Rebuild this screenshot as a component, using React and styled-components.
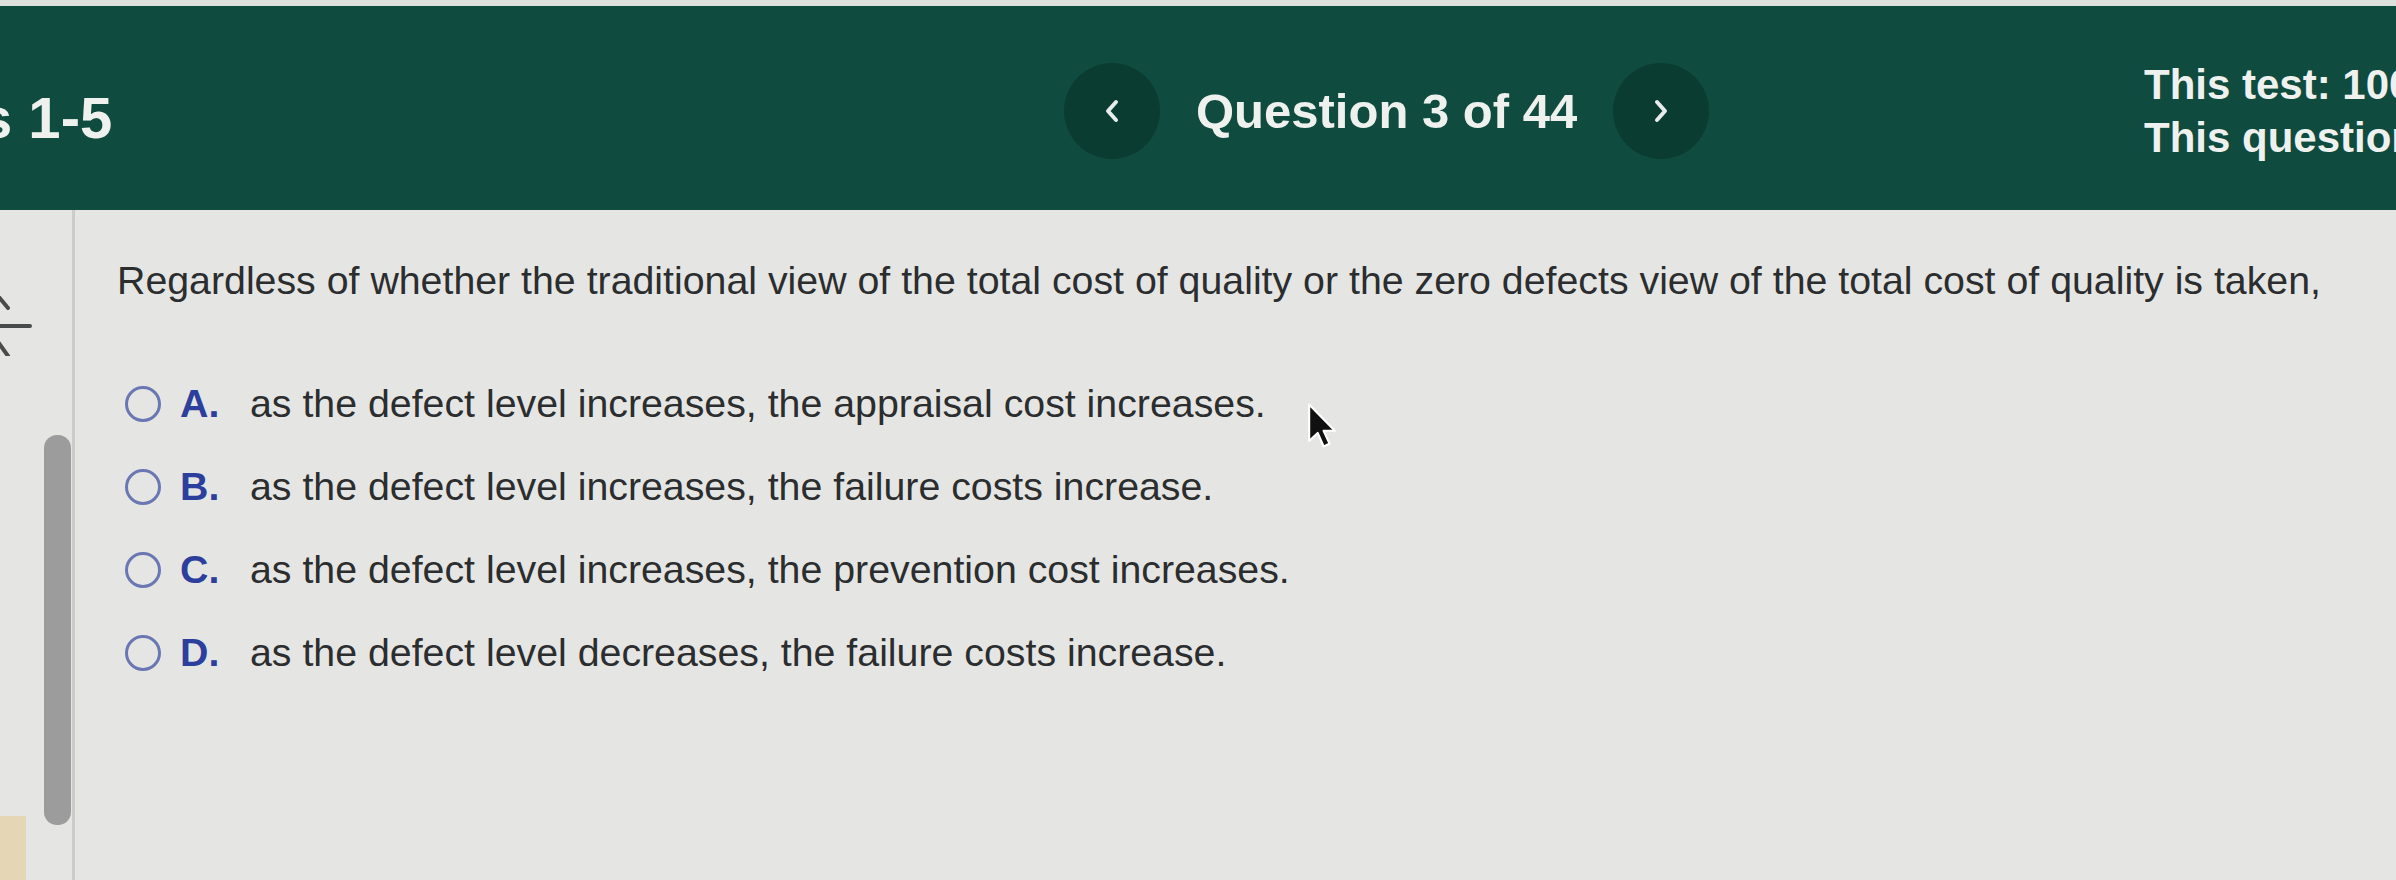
import React from 'react';
import styled, { createGlobalStyle } from 'styled-components';

const Global = createGlobalStyle`
  html, body {
    margin: 0;
    padding: 0;
  }
  body {
    width: 2396px;
    height: 880px;
    overflow: hidden;
    background: #e5e6e3;
    font-family: "Liberation Sans", Arial, sans-serif;
  }
`;

const Page = styled.div`
  display: flex;
  flex-direction: column;
  height: 880px;
  overflow: hidden;
`;

const TopStrip = styled.div`
  height: 6px;
  background: #dde2df;
`;

const Header = styled.header`
  height: 204px;
  box-sizing: border-box;
  padding-top: 6px;
  background: #0f4b3e;
  display: grid;
  grid-template-columns: 1064px 646px 1fr;
  align-items: center;
  color: #eef1ee;
  font-weight: bold;
`;

const Title = styled.div`
  font-size: 58px;
  margin-left: -20px;
  padding-top: 12px;
  white-space: nowrap;
`;

const Nav = styled.div`
  display: flex;
  align-items: center;
  gap: 36px;
`;

const NavButton = styled.button`
  width: 96px;
  height: 96px;
  border: none;
  border-radius: 50%;
  background: #0b3c32;
  display: flex;
  align-items: center;
  justify-content: center;
  padding: 0;
`;

const QuestionCount = styled.div`
  font-size: 49px;
  white-space: nowrap;
`;

const Stats = styled.div`
  padding-left: 434px;
  font-size: 42px;
  line-height: 53px;
  white-space: nowrap;
  overflow: hidden;
`;

const Body = styled.div`
  flex: 1;
  display: flex;
`;

const Sidebar = styled.aside`
  width: 72px;
  border-right: 3px solid #cbcdca;
  display: flex;
  gap: 4px;
  flex-shrink: 0;
`;

const SideLeft = styled.div`
  width: 40px;
  display: flex;
  flex-direction: column;
  justify-content: space-between;
  padding-top: 86px;
`;

const Bookmark = styled.div`
  width: 26px;
  height: 64px;
  background: #e5d7b5;
`;

const ScrollTrack = styled.div`
  width: 27px;
  padding-top: 225px;
`;

const ScrollThumb = styled.div`
  height: 390px;
  border-radius: 13px;
  background: #9b9c9b;
`;

const Main = styled.main`
  flex: 1;
  position: relative;
  padding: 48px 0 0 42px;
  color: #2b2d2f;
  font-size: 39.3px;
`;

const Question = styled.p`
  margin: 0;
  white-space: nowrap;
`;

const Options = styled.div`
  margin-top: 78px;
  padding-left: 8px;
  display: flex;
  flex-direction: column;
  gap: 38px;
`;

const OptionRow = styled.label`
  display: flex;
  align-items: center;
  height: 45px;
  white-space: nowrap;
`;

const Radio = styled.span`
  width: 36px;
  height: 36px;
  box-sizing: border-box;
  border: 3px solid #6a77b3;
  border-radius: 50%;
  margin-right: 19px;
  flex-shrink: 0;
`;

const Letter = styled.span`
  width: 70px;
  font-weight: bold;
  color: #2d3f9c;
`;

const Cursor = styled.svg`
  position: absolute;
  left: 1232px;
  top: 192px;
`;

const Chevron = ({ dir }) => (
  <svg width="14" height="24" viewBox="0 0 14 24">
    <polyline
      points={dir === 'left' ? '11,3 3,12 11,21' : '3,3 11,12 3,21'}
      fill="none"
      stroke="#e8ecea"
      strokeWidth="4"
      strokeLinecap="round"
      strokeLinejoin="round"
    />
  </svg>
);

const options = [
  { key: 'A', text: 'as the defect level increases, the appraisal cost increases.' },
  { key: 'B', text: 'as the defect level increases, the failure costs increase.' },
  { key: 'C', text: 'as the defect level increases, the prevention cost increases.' },
  { key: 'D', text: 'as the defect level decreases, the failure costs increase.' },
];

export default function App() {
  return (
    <Page>
      <Global />
      <TopStrip />
      <Header>
        <Title>s 1-5</Title>
        <Nav>
          <NavButton aria-label="Previous question">
            <Chevron dir="left" />
          </NavButton>
          <QuestionCount>Question 3 of 44</QuestionCount>
          <NavButton aria-label="Next question">
            <Chevron dir="right" />
          </NavButton>
        </Nav>
        <Stats>
          <div>This test: 100 point(s) possible</div>
          <div>This question: 1 point(s) possible</div>
        </Stats>
      </Header>
      <Body>
        <Sidebar>
          <SideLeft>
            <svg width="38" height="60" viewBox="0 0 38 60">
              <g stroke="#4a4c4c" strokeWidth="4" strokeLinecap="round" fill="none">
                <line x1="-2" y1="0" x2="8" y2="12" />
                <line x1="0" y1="30" x2="30" y2="30" />
                <line x1="-2" y1="46" x2="8" y2="60" />
              </g>
            </svg>
            <Bookmark />
          </SideLeft>
          <ScrollTrack>
            <ScrollThumb />
          </ScrollTrack>
        </Sidebar>
        <Main>
          <Question>
            Regardless of whether the traditional view of the total cost of quality or the zero defects view of the total cost of quality is taken,
          </Question>
          <Options>
            {options.map((o) => (
              <OptionRow key={o.key}>
                <Radio />
                <Letter>{o.key}.</Letter>
                <span>{o.text}</span>
              </OptionRow>
            ))}
          </Options>
          <Cursor width="30" height="48" viewBox="0 0 28 44">
            <path
              d="M2 2 L2 36 L10 28.5 L15.5 41 L21 38.5 L15.5 26.5 L26 26.5 Z"
              fill="#111"
              stroke="#fff"
              strokeWidth="2"
              strokeLinejoin="round"
            />
          </Cursor>
        </Main>
      </Body>
    </Page>
  );
}
